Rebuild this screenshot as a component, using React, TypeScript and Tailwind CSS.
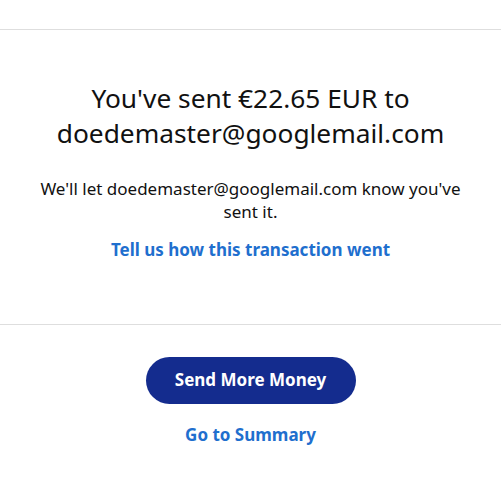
export default function App() {
  return (
    <div className="w-[501px] h-[493px] bg-white font-['Noto_Sans',sans-serif] text-[#111111]">
      <div className="h-[30px] border-b border-b-[#dedede]" />
      <div className="flex flex-col items-center text-center pt-[51px] px-4">
        <h1 className="text-[26.3px] leading-[35px] font-normal">
          You've sent €22.65 EUR to
          <br />
          doedemaster@googlemail.com
        </h1>
        <p className="mt-[26px] max-w-[450px] text-[17px] leading-[23px]">
          We'll let doedemaster@googlemail.com know you've sent it.
        </p>
        <a className="mt-[14px] text-[17px] font-bold text-[#1f6fce]">Tell us how this transaction went</a>
      </div>
      <div className="mt-[61px] border-t border-t-[#dedede]" />
      <div className="flex flex-col items-center pt-[32px]">
        <button className="w-[210px] h-[47px] rounded-full bg-[#142c8e] text-white text-[17px] font-bold">
          Send More Money
        </button>
        <a className="mt-[18px] text-[17px] font-bold text-[#1f6fce]">Go to Summary</a>
      </div>
    </div>
  );
}
